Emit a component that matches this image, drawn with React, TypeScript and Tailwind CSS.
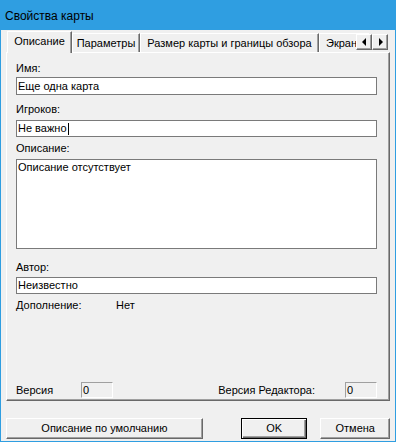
import React from "react";

function Tab({ label, w, selected }: { label: string; w: string; selected?: boolean }) {
  if (selected) {
    return (
      <div
        className={`relative z-10 -mb-px h-[22px] ${w} shrink-0 border-l border-t border-r border-l-white border-t-white border-r-[#696969] shadow-[inset_-1px_0_0_#a0a0a0] bg-[#f0f0f0] pt-[3px] text-center leading-[13px] whitespace-nowrap`}
      >
        {label}
      </div>
    );
  }
  return (
    <div
      className={`h-[19px] ${w} shrink-0 border-l border-t border-r border-l-white border-t-white border-r-[#696969] shadow-[inset_-1px_0_0_#a0a0a0] pt-[3px] text-center leading-[13px] whitespace-nowrap overflow-hidden`}
    >
      {label}
    </div>
  );
}

function ArrowBtn({ dir }: { dir: "l" | "r" }) {
  return (
    <div className="w-[16px] h-[16px] bg-[#f0f0f0] border border-t-white border-l-white border-r-[#696969] border-b-[#696969] shadow-[inset_-1px_-1px_0_#a0a0a0] flex items-center justify-center">
      {dir === "l" ? (
        <svg width="5" height="8" viewBox="0 0 5 8">
          <path d="M4 0 L4 8 L0 4 Z" fill="#000" />
        </svg>
      ) : (
        <svg width="5" height="8" viewBox="0 0 5 8">
          <path d="M1 0 L1 8 L5 4 Z" fill="#000" />
        </svg>
      )}
    </div>
  );
}

export default function App() {
  return (
    <div className="w-[396px] h-[442px] bg-[#f0f0f0] border border-[#2f9ee1] flex flex-col font-['Liberation_Sans',Arial,sans-serif] text-[11px] text-black overflow-hidden">
      {/* Title bar */}
      <div className="h-[29px] bg-[#2f9ee1] flex items-center pl-[4px] text-[12px] text-black shrink-0">
        Свойства карты
      </div>

      {/* Body */}
      <div className="flex-1 flex flex-col px-[5px]">
        {/* Tab row */}
        <div className="relative mt-[1px] h-[21px] flex items-end pl-[1px]">
          <Tab label="Описание" w="w-[65px]" selected />
          <Tab label="Параметры" w="w-[68px]" />
          <Tab label="Размер карты и границы обзора" w="w-[179px]" />
          <div className="h-[19px] w-[50px] shrink-0 border-l border-t border-l-white border-t-white pt-[3px] pl-[6px] leading-[13px] whitespace-nowrap overflow-hidden">
            Экран
          </div>
          <div className="absolute right-[2px] top-[3px] flex">
            <ArrowBtn dir="l" />
            <ArrowBtn dir="r" />
          </div>
        </div>

        {/* Panel */}
        <div className="h-[349px] border border-t-white border-l-white border-r-[#696969] border-b-[#696969] shadow-[inset_-1px_-1px_0_#a0a0a0] flex flex-col pl-[9px] pr-[12px] pb-[2px]">
          <div className="mt-[9px] leading-[13px]">Имя:</div>
          <div className="mt-[2px] h-[18px] bg-white border border-[#7a7a7a] flex items-center pl-[1px] leading-[13px]">
            Еще одна карта
          </div>
          <div className="mt-[8px] leading-[13px]">Игроков:</div>
          <div className="mt-[4px] h-[17px] bg-white border border-[#7a7a7a] flex items-center pl-[1px] leading-[13px]">
            Не важно
            <span className="inline-block w-px h-[12px] bg-black ml-[1px]" />
          </div>
          <div className="mt-[5px] leading-[13px]">Описание:</div>
          <div className="mt-[4px] h-[90px] bg-white border border-[#7a7a7a] pl-[1px] pt-[1px] leading-[13px]">
            Описание отсутствует
          </div>
          <div className="mt-[12px] leading-[13px]">Автор:</div>
          <div className="mt-[3px] h-[17px] bg-white border border-[#7a7a7a] flex items-center pl-[1px] leading-[13px]">
            Неизвестно
          </div>
          <div className="mt-[5px] flex leading-[13px]">
            <div className="w-[100px]">Дополнение:</div>
            <div>Нет</div>
          </div>
          <div className="flex-1" />
          <div className="h-[16px] flex items-center justify-between leading-[13px]">
            <div className="flex items-center">
              <div className="w-[65px]">Версия</div>
              <div className="w-[32px] h-[16px] border border-t-[#a0a0a0] border-l-[#a0a0a0] border-r-white border-b-white pl-[1px] leading-[14px]">
                0
              </div>
            </div>
            <div className="flex items-center">
              <div className="mr-[30px]">Версия Редактора:</div>
              <div className="w-[32px] h-[16px] border border-t-[#a0a0a0] border-l-[#a0a0a0] border-r-white border-b-white pl-[1px] leading-[14px]">
                0
              </div>
            </div>
          </div>
        </div>

        {/* Buttons */}
        <div className="mt-[17px] h-[21px] flex">
          <div className="w-[198px] h-[21px] border border-t-white border-l-white border-r-[#696969] border-b-[#696969] shadow-[inset_-1px_-1px_0_#a0a0a0] flex items-center justify-center leading-[13px]">
            Описание по умолчанию
          </div>
          <div className="ml-[38px] w-[67px] h-[21px] border border-black shadow-[inset_1px_1px_0_#fff,inset_-1px_-1px_0_#696969,inset_-2px_-2px_0_#a0a0a0] flex items-center justify-center leading-[13px]">
            OK
          </div>
          <div className="ml-[13px] w-[70px] h-[21px] border border-t-white border-l-white border-r-[#696969] border-b-[#696969] shadow-[inset_-1px_-1px_0_#a0a0a0] flex items-center justify-center leading-[13px]">
            Отмена
          </div>
        </div>
      </div>
    </div>
  );
}
